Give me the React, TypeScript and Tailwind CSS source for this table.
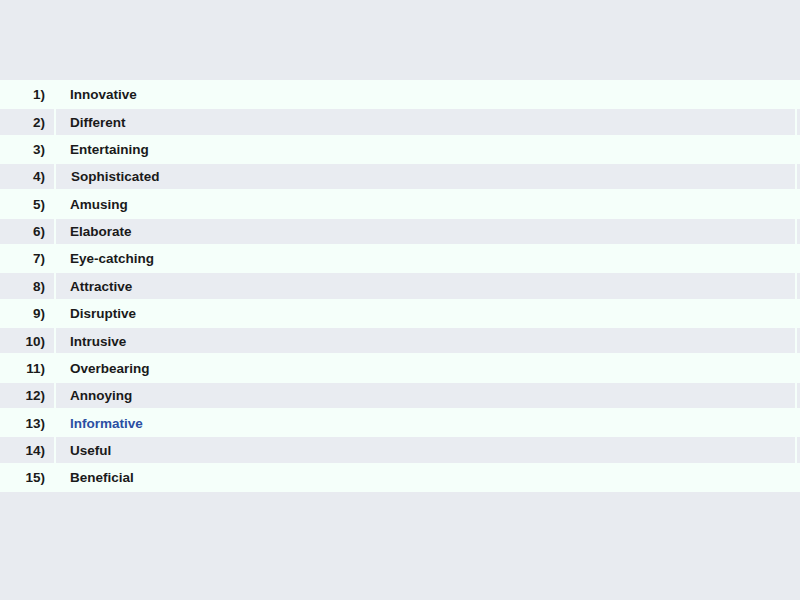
import React from "react";

const items = [
  "Innovative",
  "Different",
  "Entertaining",
  "Sophisticated",
  "Amusing",
  "Elaborate",
  "Eye-catching",
  "Attractive",
  "Disruptive",
  "Intrusive",
  "Overbearing",
  "Annoying",
  "Informative",
  "Useful",
  "Beneficial",
];

export default function App() {
  return (
    <div
      className="w-[800px] h-[600px] bg-[#e8ebf0] pt-[80px] overflow-hidden"
      style={{ fontFamily: '"Liberation Sans", Arial, sans-serif' }}
    >
      <div className="bg-[#f5fffa] py-[2px] flex flex-col gap-[2px]">
        {items.map((label, i) => {
          const even = i % 2 === 1;
          const cell = even ? "bg-[#e9ecf1]" : "bg-[#f5fffa]";
          const blue = label === "Informative";
          return (
            <div
              key={label}
              className="grid grid-cols-[54px_739px_1fr] gap-x-[2px] h-[25.35px] text-[13.5px] font-bold leading-none"
            >
              <div className={`${cell} flex items-center justify-end pr-[9px] pt-px text-[#1a1a1a]`}>
                {i + 1})
              </div>
              <div
                className={`${cell} flex items-center pt-px ${
                  blue ? "text-[#2b4fa3]" : "text-[#1a1a1a]"
                } ${label === "Sophisticated" ? "pl-[15px]" : "pl-[14px]"}`}
              >
                {label}
              </div>
              <div className={cell}></div>
            </div>
          );
        })}
      </div>
    </div>
  );
}
